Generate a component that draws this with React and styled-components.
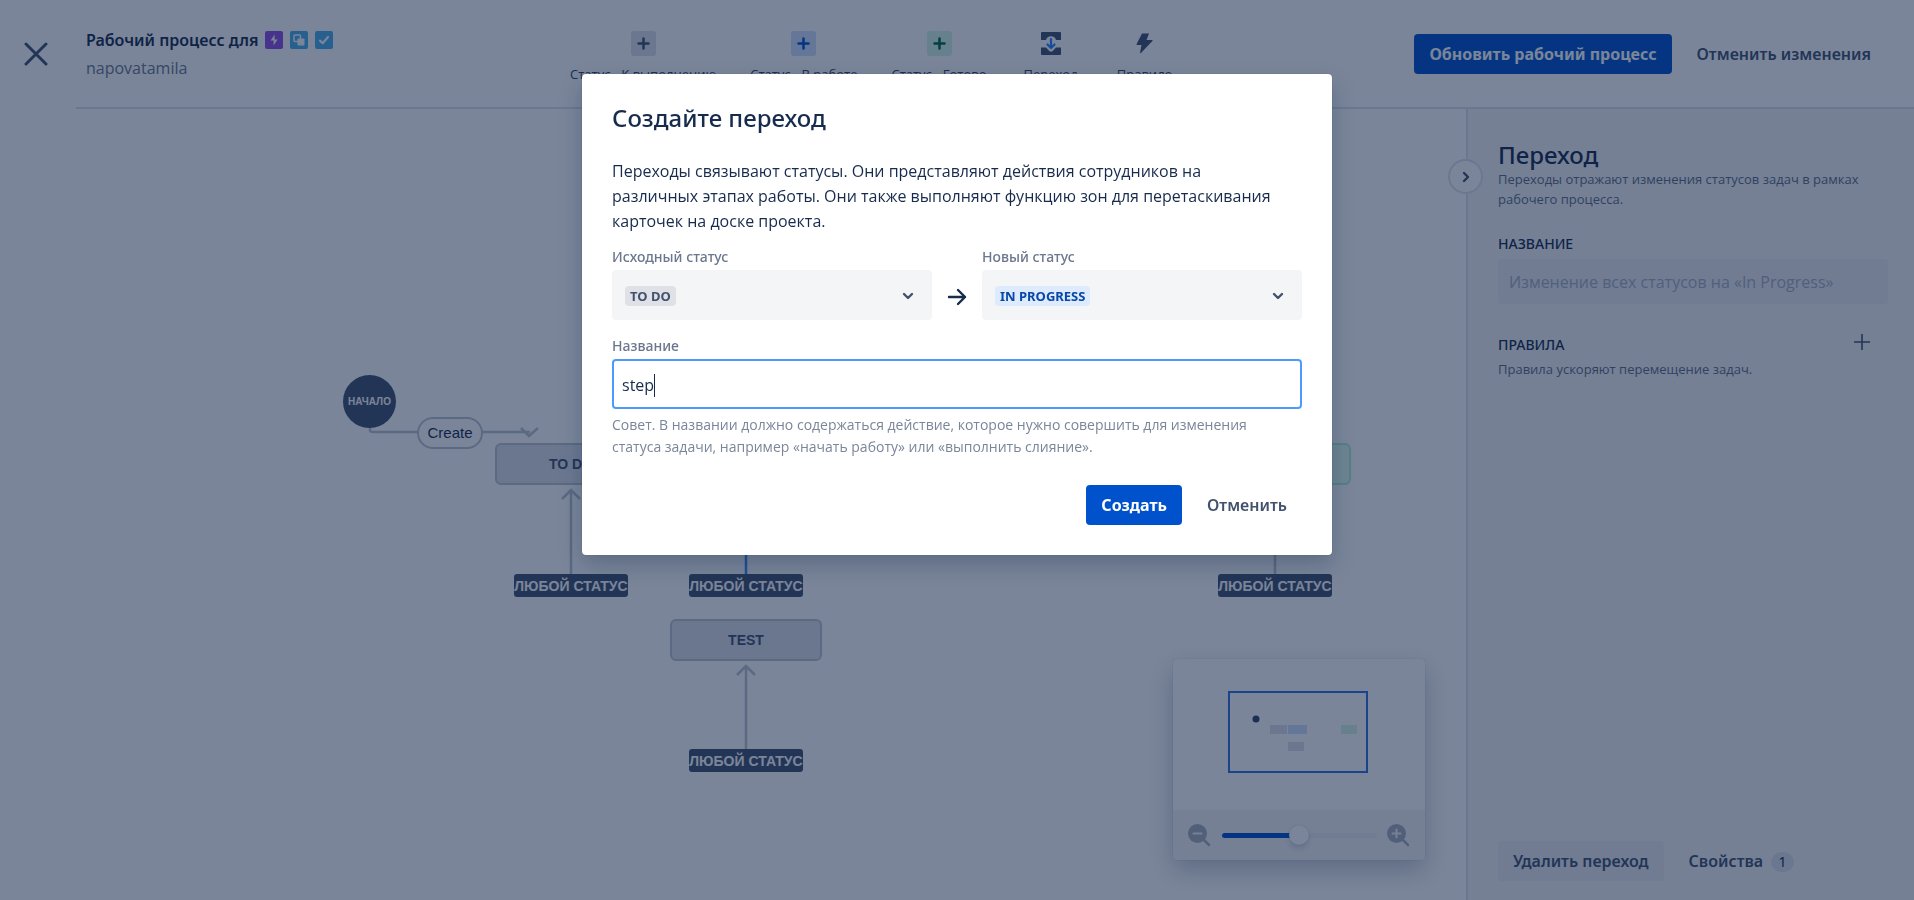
import React, { useState } from "react";
import styled, { createGlobalStyle, css } from "styled-components";

const strong = `"Noto Sans", "Open Sans", sans-serif`;
const arial = `"Liberation Sans", Arial, sans-serif`;

const GlobalStyle = createGlobalStyle`
  *, *::before, *::after { box-sizing: border-box; }
  body {
    margin: 0;
    background: #fff;
    color: #172b4d;
    font-family: "Open Sans", "Noto Sans", sans-serif;
    font-size: 16px;
    line-height: 24px;
  }
  h1, h2, h3, p { margin: 0; font-weight: 400; }
  button, input, select { font: inherit; color: inherit; }
  button { cursor: pointer; border: 0; background: none; padding: 0; }
`;

/* ---------- page shell ---------- */

const Page = styled.div`
  display: flex;
  flex-direction: column;
  min-height: 100vh;
`;

const Header = styled.header`
  display: flex;
  align-items: stretch;
  height: 109px;
`;

const CloseButton = styled.button`
  width: 76px;
  padding: 0 0 2px 24px;
  text-align: left;
  color: #42526e;
  svg { display: block; }
`;

const HeaderBar = styled.div`
  flex: 1;
  display: flex;
  border-bottom: 2px solid #dfe1ea;
  padding: 0 28px 0 10px;
`;

const Project = styled.div`
  width: 484px;
  padding-top: 26px;
`;

const ProjectTitle = styled.h1`
  display: flex;
  align-items: center;
  gap: 7px;
  font-family: ${strong};
  font-size: 16px;
  line-height: 28px;
  font-weight: 600;
  svg { display: block; }
`;

const ProjectName = styled.p`
  line-height: 28px;
  color: #6b778c;
`;

const Tools = styled.nav`
  display: flex;
  gap: 34px;
  margin-right: auto;
  padding-top: 31px;
`;

const Tool = styled.button`
  display: flex;
  flex-direction: column;
  align-items: center;
  gap: 8px;
  height: 56px;
  min-width: 60px;
  font-size: 13px;
  line-height: 20px;
  color: #344563;
  white-space: nowrap;
`;

const ToolIcon = styled.span`
  display: flex;
  align-items: center;
  justify-content: center;
  width: 25px;
  height: 25px;
  border-radius: 3px;
  background: ${(p) => p.$bg || "transparent"};
  color: ${(p) => p.$color || "#42526e"};
`;

const HeaderActions = styled.div`
  display: flex;
  gap: 10px;
  padding-top: 34px;
`;

const Button = styled.button`
  height: 40px;
  padding: 0 15px;
  border-radius: 4px;
  font-family: ${strong};
  font-weight: 600;
  line-height: 40px;
  white-space: nowrap;
  color: #42526e;
  ${(p) =>
    p.$look === "primary" &&
    css`
      background: #0052cc;
      color: #fff;
      font-weight: 700;
    `}
  ${(p) =>
    p.$look === "soft" &&
    css`
      background: #ebecf2;
    `}
`;

const Body = styled.div`
  flex: 1;
  display: flex;
`;

/* ---------- diagram ---------- */

const Canvas = styled.main`
  flex: 1;
  position: relative;
  overflow: hidden;
  font-family: ${arial};
`;

const Edges = styled.svg`
  position: absolute;
  inset: 0;
  width: 100%;
  height: 100%;
  fill: none;
  stroke: #bcc3cd;
  stroke-width: 2.5;
`;

const Placed = styled.div`
  position: absolute;
  left: ${(p) => p.$x}px;
  top: ${(p) => p.$y}px;
  display: flex;
  align-items: center;
  justify-content: center;
  white-space: nowrap;
`;

const StartNode = styled(Placed)`
  width: 53px;
  height: 53px;
  border-radius: 50%;
  background: #42526e;
  color: #fff;
  font-size: 10px;
  font-weight: 700;
`;

const TransitionPill = styled(Placed)`
  width: 66px;
  height: 32px;
  border: 2px solid #bcc3cd;
  border-radius: 16px;
  background: #fff;
  font-size: 15px;
`;

const nodeTones = {
  todo: css`background: #dfe1ea; border-color: #bcc3cd;`,
  done: css`background: #e3fcef; border-color: #abf5d1;`,
};

const StatusNode = styled(Placed)`
  width: 152px;
  height: 42px;
  border: 2px solid;
  border-radius: 6px;
  color: #42526e;
  font-size: 14px;
  font-weight: 700;
  ${(p) => nodeTones[p.$tone]}
`;

const AnyStatus = styled(Placed)`
  width: 114px;
  height: 23px;
  border-radius: 3px;
  background: #42526e;
  color: #fff;
  font-size: 14px;
  font-weight: 700;
`;

/* ---------- minimap ---------- */

const MiniMap = styled.section`
  position: absolute;
  right: 41px;
  bottom: 40px;
  width: 252px;
  border-radius: 4px;
  background: #fff;
  box-shadow: 0 0 1px rgba(9, 30, 66, 0.31), 0 10px 24px rgba(9, 30, 66, 0.25);
  svg { display: block; }
`;

const ZoomBar = styled.div`
  display: flex;
  align-items: center;
  justify-content: space-between;
  height: 50px;
  padding: 0 15px;
  background: #f4f5f7;
  border-radius: 0 0 4px 4px;
  color: #a5adba;
`;

const ZoomSlider = styled.input`
  appearance: none;
  width: 155px;
  height: 20px;
  margin: 0;
  background: transparent;
  &::-webkit-slider-runnable-track {
    height: 5px;
    border-radius: 3px;
    background: linear-gradient(to right, #0052cc 50%, #ebecf4 50%);
  }
  &::-webkit-slider-thumb {
    appearance: none;
    width: 20px;
    height: 20px;
    margin-top: -8px;
    border-radius: 50%;
    background: #fff;
    box-shadow: 0 4px 8px -2px rgba(9, 30, 66, 0.25), 0 0 1px rgba(9, 30, 66, 0.31);
  }
`;

/* ---------- side panel ---------- */

const SidePanel = styled.aside`
  position: relative;
  display: flex;
  flex-direction: column;
  width: 448px;
  padding: 32px 26px 19px 30px;
  border-left: 2px solid #dfe1e6;
  background: #f4f5f7;
`;

const Collapse = styled.button`
  position: absolute;
  left: -20px;
  top: 50px;
  display: flex;
  align-items: center;
  justify-content: center;
  width: 35px;
  height: 35px;
  border: 2px solid #dfe1e6;
  border-radius: 50%;
  background: #fff;
  color: #42526e;
`;

const PanelTitle = styled.h2`
  font-family: ${strong};
  font-size: 24px;
  line-height: 28px;
  font-weight: 500;
`;

const PanelText = styled.p`
  font-size: 13px;
  line-height: 20px;
  color: #5e6c84;
`;

const PanelLabel = styled.label`
  margin-top: 25px;
  font-family: ${strong};
  font-size: 14px;
  line-height: 20px;
  font-weight: 500;
  text-transform: uppercase;
`;

const PanelInput = styled.input`
  height: 45px;
  margin-top: 5px;
  padding: 0 11px;
  border: 0;
  border-radius: 3px;
  background: #ebecf2;
  &:disabled { color: #a5adba; }
`;

const RulesHead = styled.div`
  display: flex;
  align-items: flex-start;
  justify-content: space-between;
  margin-top: 30px;
  padding: 0 18px 3px 0;
`;

const RulesTitle = styled.h3`
  font-family: ${strong};
  font-size: 14px;
  line-height: 22px;
  font-weight: 500;
  text-transform: uppercase;
`;

const AddRule = styled.button`
  color: #42526e;
  svg { display: block; }
`;

const PanelFooter = styled.footer`
  display: flex;
  gap: 10px;
  margin-top: auto;
`;

const Count = styled.span`
  display: inline-block;
  margin-left: 8px;
  width: 23px;
  border-radius: 10px;
  background: #dfe1ea;
  font-size: 14px;
  line-height: 20px;
  font-weight: 400;
  color: #172b4d;
`;

/* ---------- dialog ---------- */

const Blanket = styled.div`
  position: fixed;
  inset: 0;
  display: flex;
  align-items: flex-start;
  justify-content: center;
  padding-top: 74px;
  background: rgba(9, 30, 66, 0.54);
`;

const Dialog = styled.form`
  width: 750px;
  padding: 30px;
  border-radius: 4px;
  background: #fff;
  box-shadow: 0 0 1px rgba(9, 30, 66, 0.31), 0 10px 22px rgba(9, 30, 66, 0.25);
`;

const DialogTitle = styled.h2`
  font-family: ${strong};
  font-size: 24px;
  line-height: 28px;
  font-weight: 500;
`;

const DialogText = styled.p`
  margin-top: 27px;
  padding-right: 20px;
  line-height: 25px;
`;

const Fields = styled.div`
  display: flex;
  align-items: flex-end;
  justify-content: space-between;
  margin-top: 13px;
`;

const Field = styled.div`
  display: flex;
  flex-direction: column;
  width: ${(p) => (p.$wide ? "100%" : "320px")};
  margin-top: ${(p) => (p.$wide ? "16px" : 0)};
`;

const FieldLabel = styled.label`
  padding-bottom: 3px;
  font-family: ${strong};
  font-size: 14px;
  line-height: 20px;
  font-weight: 500;
  color: #6b778c;
`;

const SelectBox = styled.div`
  display: flex;
  align-items: center;
  justify-content: space-between;
  height: 50px;
  padding: 2px 17px 0 13px;
  border-radius: 4px;
  background: #f4f5f7;
  color: #42526e;
`;

const StatusSelect = styled.select`
  appearance: none;
  field-sizing: content;
  height: 20px;
  padding: 0 5px;
  border: 0;
  border-radius: 4px;
  font-family: ${strong};
  font-size: 13px;
  line-height: 20px;
  font-weight: 700;
  background: ${(p) => (p.$tone === "blue" ? "#deebff" : "#dfe1e6")};
  color: ${(p) => (p.$tone === "blue" ? "#0747a6" : "#42526e")};
`;

const Between = styled.span`
  display: flex;
  align-items: center;
  height: 50px;
  padding-top: 3px;
`;

const TextBox = styled.div`
  display: flex;
  align-items: center;
  height: 50px;
  padding: 2px 8px 0;
  border: 2px solid #4c9aff;
  border-radius: 4px;
`;

const NameInput = styled.input`
  field-sizing: content;
  min-width: 0;
  padding: 0;
  border: 0;
  outline: 0;
  background: transparent;
  caret-color: transparent;
`;

const Caret = styled.span`
  width: 1px;
  height: 23px;
  background: #172b4d;
`;

const Hint = styled.p`
  margin-top: 5px;
  padding-right: 20px;
  font-size: 14px;
  line-height: 22px;
  color: #7a869a;
`;

const DialogActions = styled.div`
  display: flex;
  justify-content: flex-end;
  gap: 10px;
  margin-top: 27px;
`;

/* ---------- icons ---------- */

const PlusGlyph = () => (
  <svg width="13" height="13" viewBox="0 0 13 13" stroke="currentColor" strokeWidth="2.5" strokeLinecap="round">
    <path d="M6.5 1.5v10M1.5 6.5h10" />
  </svg>
);

const Chevron = ({ turn = 0 }) => (
  <svg width="14" height="14" viewBox="0 0 14 14" fill="none" stroke="currentColor" strokeWidth="2.4" strokeLinecap="round" strokeLinejoin="round">
    <path d="M3 5l4 4 4-4" transform={`rotate(${turn} 7 7)`} />
  </svg>
);

const EpicIcon = () => (
  <svg width="18" height="18" viewBox="0 0 18 18">
    <rect width="18" height="18" rx="2" fill="#904ee2" />
    <path d="M9.6 3.6L5.6 9.4h3v5l4-5.8h-3z" fill="#fff" />
  </svg>
);

const SubtaskIcon = () => (
  <svg width="18" height="18" viewBox="0 0 18 18">
    <rect width="18" height="18" rx="2" fill="#4bade8" />
    <rect x="4" y="4" width="6.5" height="6.5" rx="1" fill="none" stroke="#fff" strokeWidth="1.4" />
    <rect x="7.5" y="7.5" width="7" height="7" rx="1" fill="#fff" />
  </svg>
);

const TaskIcon = () => (
  <svg width="18" height="18" viewBox="0 0 18 18">
    <rect width="18" height="18" rx="2" fill="#4bade8" />
    <path d="M5 9.6l2.7 2.6L13 6" fill="none" stroke="#fff" strokeWidth="2.2" strokeLinecap="round" strokeLinejoin="round" />
  </svg>
);

const TransitionIcon = () => (
  <svg width="20" height="23" viewBox="0 0 20 23">
    <path d="M1 0h18a1 1 0 011 1v7h-5a5.2 5.200 0 00-10 0H0V1a1 1 0 011-1zM0 15.500h5l3 3.200a2.800 2.800 0 004 0l3-3.200h5V22a1 1 0 01-1 1H1a1 1 0 01-1-1z" fill="#42526e" />
    <path d="M10 7v9M6.5 12.5l3.500 3.500 3.500-3.500" fill="none" stroke="#2684ff" strokeWidth="2.2" strokeLinecap="round" strokeLinejoin="round" />
  </svg>
);

const BoltIcon = () => (
  <svg width="17" height="21" viewBox="0 0 17 21">
    <path d="M6 .5h7L10.5 7H16c.6 0 .8.5.4 1L5 20c-.6.5-1 .2-.9-.4L5.5 12H1.2c-.6 0-.8-.4-.6-1z" fill="currentColor" />
  </svg>
);

const Magnifier = ({ plus }) => (
  <svg width="23" height="23" viewBox="0 0 23 23" fill="none" strokeLinecap="round">
    <circle cx="9.5" cy="9.5" r="9.5" fill="currentColor" />
    <path d="M16 16l5 5" stroke="currentColor" strokeWidth="2.5" />
    <path d={plus ? "M9.5 5.5v8M5.5 9.5h8" : "M5.5 9.5h8"} stroke="#f4f5f7" strokeWidth="2" />
  </svg>
);

const tools = [
  { label: "Статус - К выполнению", bg: "#dfe1e6", color: "#42526e" },
  { label: "Статус - В работе", bg: "#cfe0ff", color: "#0052cc" },
  { label: "Статус - Готово", bg: "#d3f5e6", color: "#006644" },
];

const anyStatuses = [
  [514, 465],
  [689, 465],
  [1218, 465],
  [689, 640],
];

export default function App() {
  const [name, setName] = useState("step");
  const [zoom, setZoom] = useState(50);

  return (
    <>
      <GlobalStyle />
      <Page>
        <Header>
          <CloseButton type="button" aria-label="Закрыть">
            <svg width="24" height="24" viewBox="0 0 24 24" stroke="currentColor" strokeWidth="3" strokeLinecap="round">
              <path d="M2 2l20 20M22 2L2 22" />
            </svg>
          </CloseButton>
          <HeaderBar>
            <Project>
              <ProjectTitle>
                Рабочий процесс для <EpicIcon />
                <SubtaskIcon />
                <TaskIcon />
              </ProjectTitle>
              <ProjectName>napovatamila</ProjectName>
            </Project>
            <Tools>
              {tools.map((t) => (
                <Tool type="button" key={t.label}>
                  <ToolIcon $bg={t.bg} $color={t.color}>
                    <PlusGlyph />
                  </ToolIcon>
                  {t.label}
                </Tool>
              ))}
              <Tool type="button">
                <ToolIcon>
                  <TransitionIcon />
                </ToolIcon>
                Переход
              </Tool>
              <Tool type="button">
                <ToolIcon>
                  <BoltIcon />
                </ToolIcon>
                Правило
              </Tool>
            </Tools>
            <HeaderActions>
              <Button type="button" $look="primary">Обновить рабочий процесс</Button>
              <Button type="button">Отменить изменения</Button>
            </HeaderActions>
          </HeaderBar>
        </Header>

        <Body>
          <Canvas>
            <Edges aria-hidden="true">
              <path d="M370 319v2q0 2 3 2h157M521 319l8 8 9-8" />
              <path d="M571 465V381M562 390l9-9 9 9" />
              <path d="M746 465V381M737 390l9-9 9 9" stroke="#3a8bff" />
              <path d="M1275 465V381M1266 390l9-9 9 9" />
              <path d="M746 641v-84M737 566l9-9 9 9" />
            </Edges>
            <StartNode $x={343} $y={266}>НАЧАЛО</StartNode>
            <TransitionPill $x={417} $y={308}>Create</TransitionPill>
            <StatusNode $tone="todo" $x={495} $y={334}>TO DO</StatusNode>
            <StatusNode $tone="done" $x={1199} $y={334} />
            <StatusNode $tone="todo" $x={670} $y={510}>TEST</StatusNode>
            {anyStatuses.map(([x, y]) => (
              <AnyStatus key={`${x}-${y}`} $x={x} $y={y}>ЛЮБОЙ СТАТУС</AnyStatus>
            ))}
            <MiniMap>
              <svg width="252" height="151" viewBox="0 0 252 151">
                <rect x="56" y="33" width="138" height="80" fill="none" stroke="#2f6fe0" strokeWidth="2" />
                <circle cx="83" cy="60" r="3.5" fill="#344563" />
                <rect x="97" y="66" width="17" height="9" fill="#dfe1e6" />
                <rect x="115" y="66" width="19" height="9" fill="#cfe0ff" />
                <rect x="168" y="66" width="16" height="9" fill="#d3f5e6" />
                <rect x="115" y="83" width="16" height="9" fill="#dfe1e6" />
              </svg>
              <ZoomBar>
                <Magnifier />
                <ZoomSlider
                  type="range"
                  min="0"
                  max="100"
                  value={zoom}
                  onChange={(e) => setZoom(e.target.value)}
                  aria-label="Масштаб"
                />
                <Magnifier plus />
              </ZoomBar>
            </MiniMap>
          </Canvas>

          <SidePanel>
            <Collapse type="button" aria-label="Свернуть панель">
              <Chevron turn={-90} />
            </Collapse>
            <PanelTitle>Переход</PanelTitle>
            <PanelText>Переходы отражают изменения статусов задач в рамках рабочего процесса.</PanelText>
            <PanelLabel htmlFor="transition-name">Название</PanelLabel>
            <PanelInput id="transition-name" disabled value="Изменение всех статусов на «In Progress»" />
            <RulesHead>
              <RulesTitle>Правила</RulesTitle>
              <AddRule type="button" aria-label="Добавить правило">
                <svg width="16" height="16" viewBox="0 0 16 16" stroke="currentColor" strokeWidth="1.6">
                  <path d="M8 0v16M0 8h16" />
                </svg>
              </AddRule>
            </RulesHead>
            <PanelText>Правила ускоряют перемещение задач.</PanelText>
            <PanelFooter>
              <Button type="button" $look="soft">Удалить переход</Button>
              <Button type="button">
                Свойства<Count>1</Count>
              </Button>
            </PanelFooter>
          </SidePanel>
        </Body>
      </Page>

      <Blanket>
        <Dialog role="dialog" aria-labelledby="dialog-title" onSubmit={(e) => e.preventDefault()}>
          <DialogTitle id="dialog-title">Создайте переход</DialogTitle>
          <DialogText>
            Переходы связывают статусы. Они представляют действия сотрудников на различных этапах работы. Они также
            выполняют функцию зон для перетаскивания карточек на доске проекта.
          </DialogText>
          <Fields>
            <Field>
              <FieldLabel htmlFor="from-status">Исходный статус</FieldLabel>
              <SelectBox>
                <StatusSelect id="from-status" defaultValue="TO DO">
                  <option>TO DO</option>
                </StatusSelect>
                <Chevron />
              </SelectBox>
            </Field>
            <Between aria-hidden="true">
              <svg width="20" height="18" viewBox="0 0 20 18" fill="none" stroke="#172b4d" strokeWidth="2.4" strokeLinecap="round" strokeLinejoin="round">
                <path d="M2 9h16M11 2l7 7-7 7" />
              </svg>
            </Between>
            <Field>
              <FieldLabel htmlFor="to-status">Новый статус</FieldLabel>
              <SelectBox>
                <StatusSelect id="to-status" $tone="blue" defaultValue="IN PROGRESS">
                  <option>IN PROGRESS</option>
                </StatusSelect>
                <Chevron />
              </SelectBox>
            </Field>
          </Fields>
          <Field $wide>
            <FieldLabel htmlFor="new-name">Название</FieldLabel>
            <TextBox>
              <NameInput id="new-name" value={name} onChange={(e) => setName(e.target.value)} />
              <Caret />
            </TextBox>
            <Hint>
              Совет. В названии должно содержаться действие, которое нужно совершить для изменения статуса задачи,
              например «начать работу» или «выполнить слияние».
            </Hint>
          </Field>
          <DialogActions>
            <Button type="submit" $look="primary">Создать</Button>
            <Button type="button">Отменить</Button>
          </DialogActions>
        </Dialog>
      </Blanket>
    </>
  );
}
